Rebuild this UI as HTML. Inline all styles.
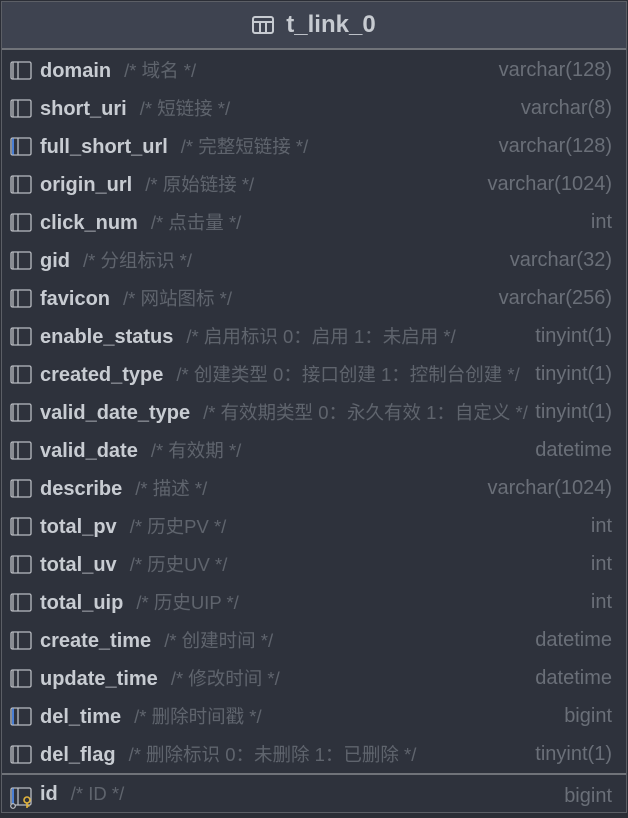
<!DOCTYPE html>
<html><head><meta charset="utf-8"><style>
*{margin:0;padding:0;box-sizing:border-box}
html,body{width:628px;height:818px;background:#2b2e36;overflow:hidden}
.box{position:absolute;left:1px;top:1px;width:626px;height:812px;background:#2e323c;border:1px solid #5c5f66}
.hdr{position:absolute;left:0;top:0;width:624px;height:48px;background:#3e4350;border-bottom:2px solid #707379}
.title{position:absolute;left:0;right:0;top:9px;text-align:center;font:bold 24px "Liberation Sans",sans-serif;color:#c7cbd1}
.title svg{vertical-align:-2px;margin-right:12px}
.row{position:absolute;left:0;width:624px;height:38px;font-family:"Liberation Sans","Noto Sans CJK SC",sans-serif}
.ic{position:absolute;left:8px;top:9px}
.nm{font-weight:bold;font-size:20px;color:#c8ccd2;white-space:nowrap}
.cm{color:#5f646d;font-weight:normal;font-size:18.5px;margin-left:13px}
.ty{position:absolute;right:14px;top:7px;font-size:20px;color:#6a6f78;background:#2e323c;padding-left:4px}
.sep{position:absolute;left:0;top:771px;width:624px;height:2px;background:#707379}
.clip{position:absolute;left:38px;top:5px;width:488px;overflow:hidden;white-space:nowrap}
</style></head><body>
<div class="box">
<div class="hdr"><div class="title"><svg width="22" height="18" viewBox="0 0 22 18"><rect x="1" y="1" width="20" height="16" rx="2" fill="none" stroke="#c7cbd1" stroke-width="2"/><line x1="1" y1="6" x2="21" y2="6" stroke="#c7cbd1" stroke-width="2"/><line x1="8" y1="6" x2="8" y2="17" stroke="#c7cbd1" stroke-width="2"/><line x1="14" y1="6" x2="14" y2="17" stroke="#c7cbd1" stroke-width="2"/></svg>t_link_0</div></div>
<div id="rows"></div>
<div class="sep"></div>
</div>
<script>
var d=[["domain","域名","varchar(128)"],["short_uri","短链接","varchar(8)"],["full_short_url","完整短链接","varchar(128)",1],["origin_url","原始链接","varchar(1024)"],["click_num","点击量","int"],["gid","分组标识","varchar(32)"],["favicon","网站图标","varchar(256)"],["enable_status","启用标识 0：启用 1：未启用","tinyint(1)"],["created_type","创建类型 0：接口创建 1：控制台创建","tinyint(1)"],["valid_date_type","有效期类型 0：永久有效 1：自定义","tinyint(1)"],["valid_date","有效期","datetime"],["describe","描述","varchar(1024)"],["total_pv","历史PV","int"],["total_uv","历史UV","int"],["total_uip","历史UIP","int"],["create_time","创建时间","datetime"],["update_time","修改时间","datetime"],["del_time","删除时间戳","bigint",1],["del_flag","删除标识 0：未删除 1：已删除","tinyint(1)"],["id","ID","bigint",2]];
var h="";
d.forEach(function(r,i){
var top=50+38*i+(i==19?4:0);
var bl=r[3]?"#4a7fd4":"#8a8d93";
var ic='<svg class="ic" width="24" height="22" viewBox="0 0 24 22"><rect x="1" y="1" width="20" height="17" rx="1.5" fill="none" stroke="#b9bcc2" stroke-width="1.3"/><line x1="3" y1="1.5" x2="3" y2="17.5" stroke="'+bl+'" stroke-width="2"/><line x1="8" y1="1" x2="8" y2="18" stroke="#b9bcc2" stroke-width="1.3"/>'+(r[3]==2?'<circle cx="3" cy="19" r="2.3" fill="#2e323c" stroke="#c0c3c8" stroke-width="1.2"/><circle cx="17" cy="13" r="3" fill="#2e323c" stroke="#e2b43c" stroke-width="1.6"/><line x1="17" y1="16" x2="17" y2="21" stroke="#e2b43c" stroke-width="1.6"/><line x1="17" y1="19" x2="19.5" y2="19" stroke="#e2b43c" stroke-width="1.4"/>':'')+'</svg>';
h+='<div class="row" style="top:'+top+'px">'+ic+'<div class="clip"><span class="nm">'+r[0]+'</span><span class="cm">/* '+r[1]+' */</span></div><div class="ty">'+r[2]+'</div></div>';
});
document.getElementById("rows").innerHTML=h;
</script>
</body></html>
